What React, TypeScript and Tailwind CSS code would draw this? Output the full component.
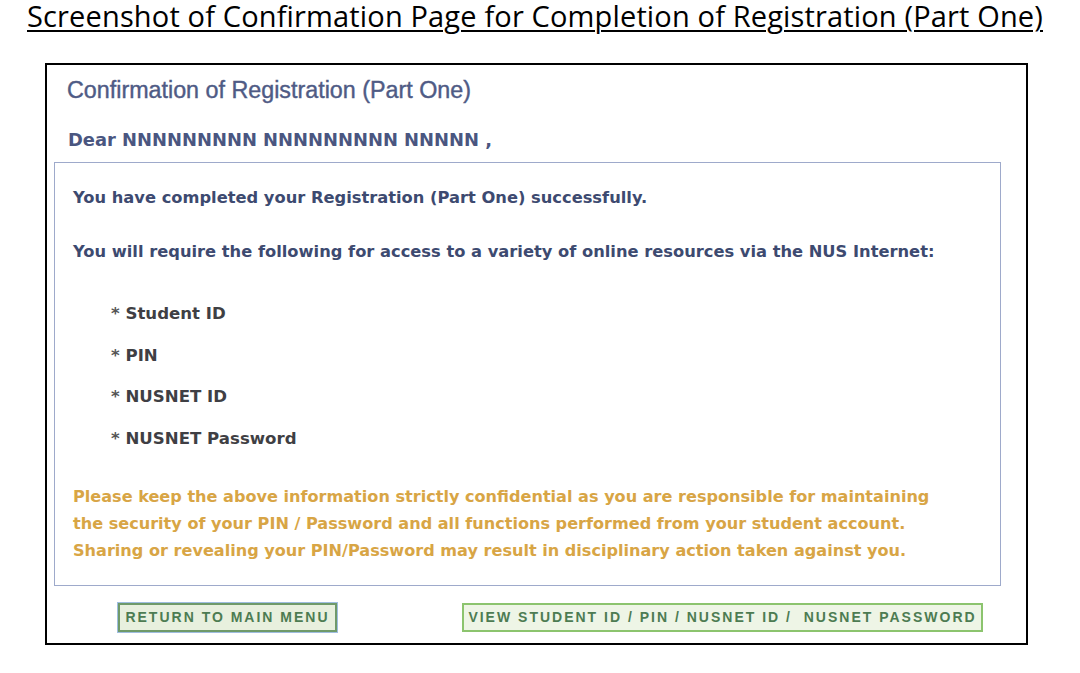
import React from 'react';

const items = ['Student ID', 'PIN', 'NUSNET ID', 'NUSNET Password'];

export default function App() {
  return (
    <div className="w-[1080px] h-[673px] bg-white overflow-hidden">
      {/* caption above the screenshot */}
      <div className="pl-[27px] h-[63px]">
        <h1 className="text-[29px] leading-[32px] text-black underline decoration-[2px] underline-offset-[3px] tracking-[0.15px] font-['Open_Sans',sans-serif] whitespace-nowrap">
          Screenshot of Confirmation Page for Completion of Registration (Part One)
        </h1>
      </div>

      {/* framed page */}
      <div className="ml-[45px] w-[983px] h-[582px] border-2 border-black pt-[11px] pl-[7px] pr-[25px]">
        <h2 className="pl-[13px] text-[23.3px] leading-[28px] text-[#4f5b85] font-['Liberation_Sans',sans-serif] [-webkit-text-stroke:0.4px_#4f5b85]">
          Confirmation of Registration (Part One)
        </h2>
        <p className="pl-[14px] mt-[24px] text-[17.9px] leading-[24px] font-bold text-[#4a5680] font-['DejaVu_Sans',sans-serif]">
          Dear NNNNNNNNN NNNNNNNNN NNNNN ,
        </p>

        <div className="mt-[10px] h-[424px] border border-[#9eaacb] pl-[18px] pt-[24px] font-['DejaVu_Sans',sans-serif] font-bold">
          <p className="text-[16.3px] leading-[22px] text-[#3d4a70]">
            You have completed your Registration (Part One) successfully.
          </p>
          <p className="mt-[32px] text-[16.3px] leading-[22px] text-[#3d4a70]">
            You will require the following for access to a variety of online resources via the NUS Internet:
          </p>

          <ul className="mt-[40px] pl-[38px] flex flex-col gap-[19.5px] text-[16.6px] leading-[22px] text-[#3f3f44]">
            {items.map((it) => (
              <li key={it}>
                <span className="text-[#555]">*</span> {it}
              </li>
            ))}
          </ul>

          <div className="mt-[33px] text-[16.1px] leading-[27px] text-[#d8a545]">
            <p>Please keep the above information strictly confidential as you are responsible for maintaining</p>
            <p>the security of your PIN / Password and all functions performed from your student account.</p>
            <p>Sharing or revealing your PIN/Password may result in disciplinary action taken against you.</p>
          </div>
        </div>

        <div className="mt-[17px] flex items-center font-['Liberation_Sans',sans-serif] font-bold text-[14px] tracking-[2px] text-[#4d7c52]">
          <button className="ml-[64px] w-[219px] h-[29px] bg-[#e8f0de] border-2 border-[#6f9a6a] outline outline-1 outline-[#9fbde0] flex items-center justify-center">
            RETURN TO MAIN MENU
          </button>
          <button className="ml-[125px] w-[521px] h-[29px] bg-[#eef5e6] border-2 border-[#8cc46e] flex items-center justify-center">
            VIEW STUDENT ID / PIN / NUSNET ID /&nbsp; NUSNET PASSWORD
          </button>
        </div>
      </div>
    </div>
  );
}
